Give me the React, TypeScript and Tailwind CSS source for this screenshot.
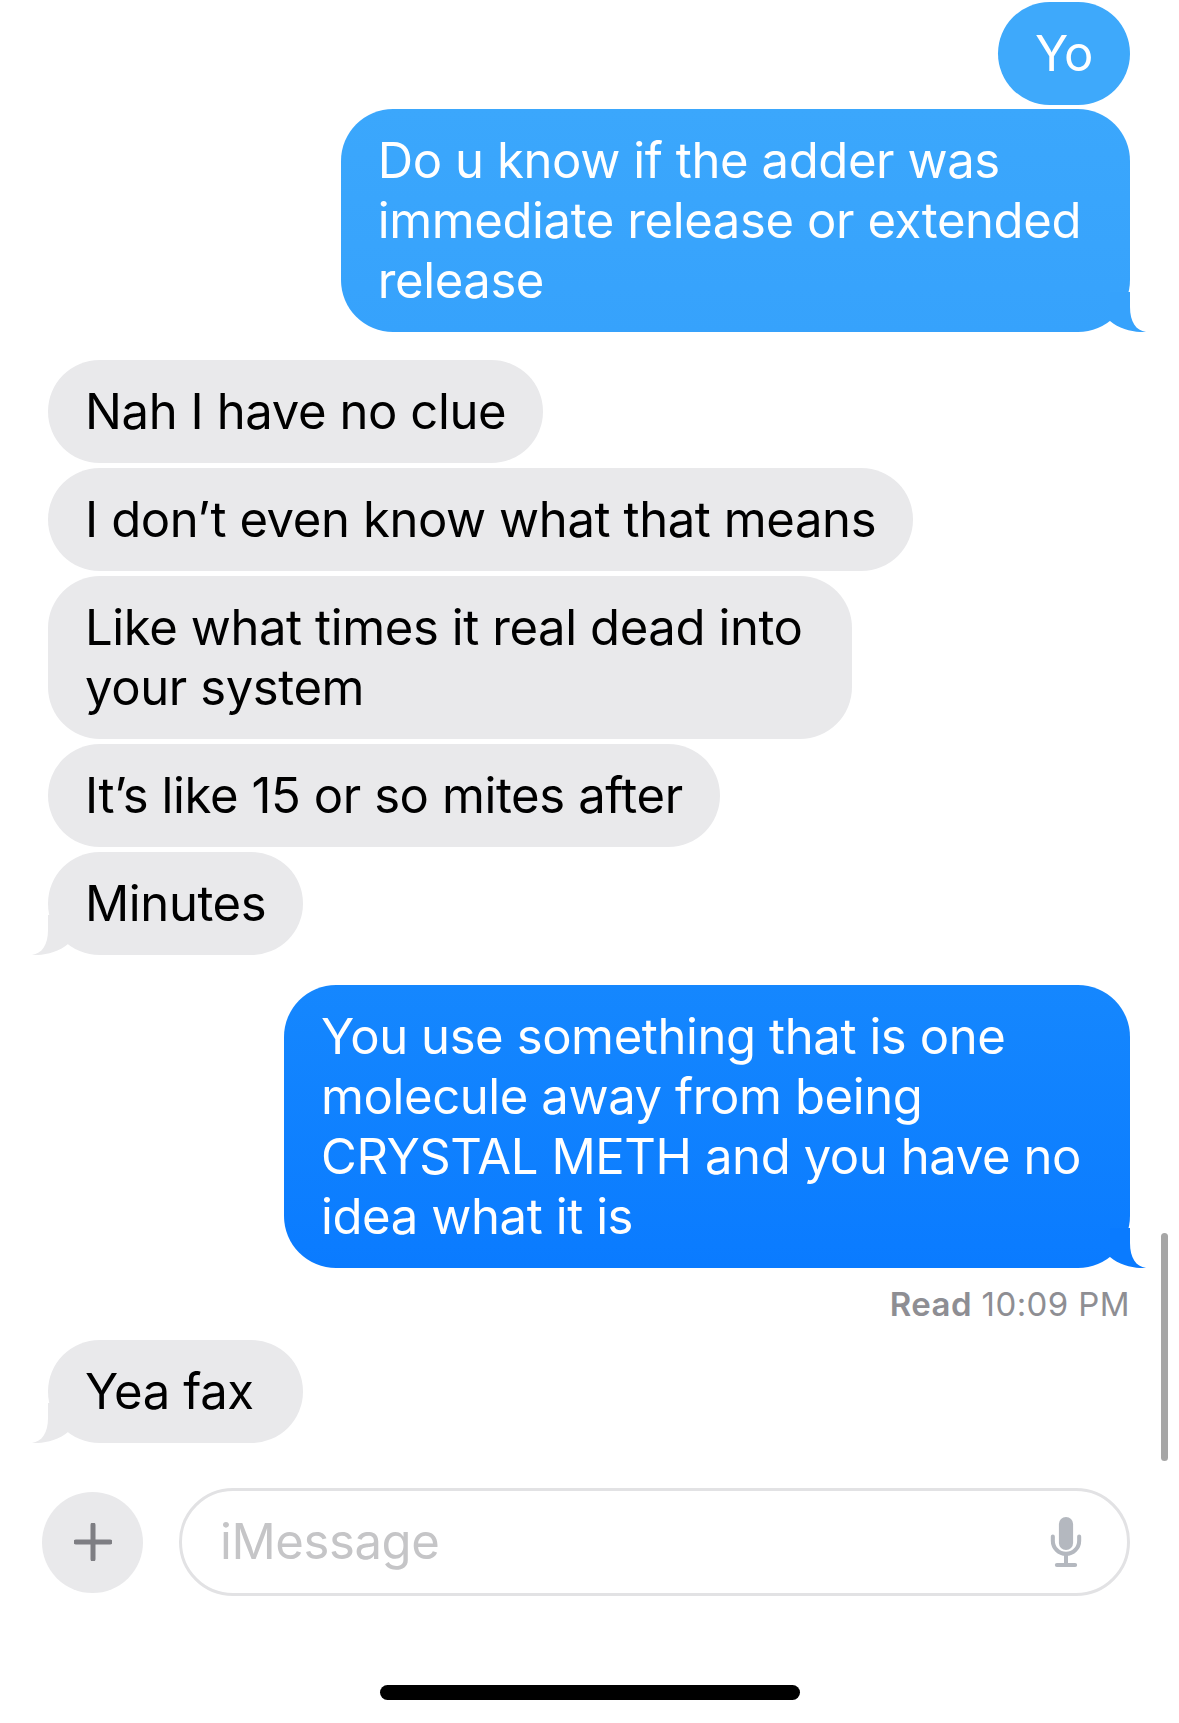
import React from "react";

type Side = "me" | "them";

const Tail = ({ side, color }: { side: Side; color: string }) =>
  side === "me" ? (
    <svg className="absolute -right-[16px] bottom-0" width="40" height="40" viewBox="0 0 40 40">
      <path d="M4 0 H24 V15 C24 30 30 38.5 40 40 C30 40.6 14 38 4 29 Z" fill={color} />
    </svg>
  ) : (
    <svg className="absolute -left-[16px] bottom-0" width="40" height="40" viewBox="0 0 40 40">
      <path d="M36 0 H16 V15 C16 30 10 38.5 0 40 C10 40.6 26 38 36 29 Z" fill={color} />
    </svg>
  );

const Bubble = ({
  side,
  tail,
  tone,
  wide,
  children,
}: {
  side: Side;
  tail?: boolean;
  tone?: string;
  wide?: boolean;
  children: React.ReactNode;
}) => {
  const tailColor = side === "them" ? "#E9E9EB" : tone === "dark" ? "#0A7BFF" : "#36A2FC";
  const bg =
    side === "them"
      ? "bg-[#E9E9EB] text-black"
      : tone === "dark"
        ? "bg-linear-to-b from-[#1587FE] to-[#0A7BFF] text-white"
        : tone === "top"
          ? "bg-[#3EA9FB] text-white"
          : "bg-linear-to-b from-[#3BA7FC] to-[#36A2FC] text-white";
  return (
    <div
      className={`relative rounded-[52px] pl-[37px] ${wide ? "pr-[49px]" : "pr-[37px]"} py-[21.5px] text-[49px] leading-[60px] tracking-[-0.4px] whitespace-nowrap ${bg}`}
    >
      {children}
      {tail && <Tail side={side} color={tailColor} />}
    </div>
  );
};

const Mic = () => (
  <svg width="32" height="50" viewBox="0 0 94 148" fill="none">
    <rect x="26" y="0" width="42" height="98" rx="21" fill="#B4B8BF" />
    <path d="M8 58 V70 A39 39 0 0 0 86 70 V58" stroke="#B4B8BF" strokeWidth="12" strokeLinecap="round" />
    <path d="M47 110 V140" stroke="#B4B8BF" strokeWidth="12" />
    <path d="M20 142 H74" stroke="#B4B8BF" strokeWidth="12" strokeLinecap="round" />
  </svg>
);

export default function App() {
  return (
    <div className="relative w-[1179px] h-[1723px] overflow-hidden bg-white font-['Inter',sans-serif]">
      <div className="flex flex-col pl-[48px] pr-[49px] pt-[2px]">
        {/* sent */}
        <div className="flex flex-col items-end gap-[4px]">
          <Bubble side="me" tone="top">Yo</Bubble>
          <Bubble side="me" tone="light" tail wide>
            Do u know if the adder was
            <br />
            immediate release or extended
            <br />
            release
          </Bubble>
        </div>

        {/* received */}
        <div className="mt-[28px] flex flex-col items-start gap-[5px]">
          <Bubble side="them">Nah I have no clue</Bubble>
          <Bubble side="them">I don’t even know what that means</Bubble>
          <Bubble side="them" wide>
            Like what times it real dead into
            <br />
            your system
          </Bubble>
          <Bubble side="them">It’s like 15 or so mites after</Bubble>
          <Bubble side="them" tail>
            Minutes
          </Bubble>
        </div>

        <div className="mt-[30px] flex flex-col items-end">
          <Bubble side="me" tone="dark" tail wide>
            You use something that is one
            <br />
            molecule away from being
            <br />
            CRYSTAL METH and you have no
            <br />
            idea what it is
          </Bubble>
          <div className="mt-[16px] h-[40px] text-[33px] leading-[40px] tracking-[0.4px] text-[#8E8E93]">
            <span className="font-semibold">Read</span> 10:09 PM
          </div>
        </div>

        <div className="mt-[16px] flex flex-col items-start">
          <Bubble side="them" tail wide>
            Yea fax
          </Bubble>
        </div>
      </div>

      {/* input bar */}
      <div className="mt-[45px] flex items-center gap-[36px] pl-[42px] pr-[49px]">
        <div className="flex h-[101px] w-[101px] shrink-0 items-center justify-center rounded-full bg-[#E9E9EB]">
          <svg width="38" height="38" viewBox="0 0 38 38">
            <path d="M19 2 V36 M2 19 H36" stroke="#7E7E83" strokeWidth="5" strokeLinecap="round" />
          </svg>
        </div>
        <div className="flex h-[108px] flex-1 items-center justify-between rounded-full border-[3px] border-[#E2E2E4] pl-[38px] pr-[45px]">
          <span className="text-[49px] tracking-[-0.4px] text-[#C5C5C7]">iMessage</span>
          <Mic />
        </div>
      </div>

      <div className="mt-[89px] flex justify-center">
        <div className="h-[15px] w-[420px] rounded-full bg-black" />
      </div>

      {/* scroll indicator */}
      <div className="absolute left-[1161px] top-[1233px] h-[228px] w-[7px] rounded-full bg-[#A6A6A6]" />
    </div>
  );
}
